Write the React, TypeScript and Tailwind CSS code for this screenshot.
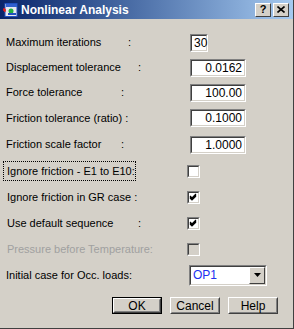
import React from "react";

const font = { fontFamily: '"Liberation Sans", Arial, sans-serif' };

function Sunken({ className = "", children }: { className?: string; children?: React.ReactNode }) {
  return (
    <div className={`border border-t-[#808080] border-l-[#808080] border-b-white border-r-white ${className}`}>
      <div className="h-full w-full border border-t-[#404040] border-l-[#404040] border-b-[#d4d0c8] border-r-[#d4d0c8] bg-white">
        {children}
      </div>
    </div>
  );
}

function Check({ checked, disabled }: { checked?: boolean; disabled?: boolean }) {
  return (
    <div className="w-[13px] h-[13px] border border-t-[#808080] border-l-[#808080] border-b-white border-r-white">
      <div
        className={`h-full w-full border border-t-[#404040] border-l-[#404040] border-b-[#d4d0c8] border-r-[#d4d0c8] ${
          disabled ? "bg-[#d4d0c8]" : "bg-white"
        }`}
      >
        {checked && (
          <svg width="9" height="9" viewBox="0 0 9 9" className="block">
            <path d="M1 4 L3 6 L7 2 M1 5 L3 7 L7 3 M1 3 L3 5 L7 1" stroke="#000" strokeWidth="1.2" fill="none" />
          </svg>
        )}
      </div>
    </div>
  );
}

function Button({ label, primary }: { label: string; primary?: boolean }) {
  const inner = (
    <div className="h-full w-full border border-t-white border-l-white border-b-[#404040] border-r-[#404040]">
      <div className="h-full w-full border border-t-[#d4d0c8] border-l-[#d4d0c8] border-b-[#808080] border-r-[#808080] flex items-center justify-center text-[12px] text-black">
        {label}
      </div>
    </div>
  );
  return (
    <div className={`w-[50px] h-[17px] ${primary ? "border border-black" : ""}`}>{inner}</div>
  );
}

function TitleButton({ children }: { children: React.ReactNode }) {
  return (
    <div className="w-[16px] h-[14px] bg-[#d4d0c8] border border-t-white border-l-white border-b-[#404040] border-r-[#404040] flex items-center justify-center">
      {children}
    </div>
  );
}

type InputRow = { label: string; colon: number | null; value: string; width: number; align: "left" | "right"; h: string };

const inputRows: InputRow[] = [
  { label: "Maximum iterations", colon: 128, value: "30", width: 18, align: "left", h: "h-[25px]" },
  { label: "Displacement tolerance", colon: 138, value: "0.0162", width: 56, align: "right", h: "h-[25px]" },
  { label: "Force tolerance", colon: 121, value: "100.00", width: 56, align: "right", h: "h-[25px]" },
  { label: "Friction tolerance (ratio) :", colon: null, value: "0.1000", width: 56, align: "right", h: "h-[26px]" },
  { label: "Friction scale factor", colon: 121, value: "1.0000", width: 56, align: "right", h: "h-[27px]" },
];

export default function App() {
  return (
    <div className="w-[294px] h-[329px] bg-[#d4d0c8] flex flex-col border-r border-b border-r-[#404040] border-b-[#404040]" style={font}>
      {/* title bar */}
      <div className="h-[19px] bg-gradient-to-r from-[#0a246a] to-[#a6caf0] flex items-center pl-[3px] pr-[4px]">
        <svg width="15" height="14" viewBox="0 0 15 14" className="shrink-0">
          <rect x="2" y="0.5" width="12" height="13" fill="#e8e8f0" stroke="#2050c0" />
          <rect x="3" y="1" width="11" height="3" fill="#3060d0" />
          <path d="M0 7 L3 7 M1 5 L2 9" stroke="#e02020" strokeWidth="1.5" />
          <circle cx="8" cy="8" r="2.5" fill="#20b040" />
          <rect x="5" y="10" width="8" height="2" fill="#2050c0" />
        </svg>
        <span className="ml-[3px] text-white font-bold text-[12px] leading-none">Nonlinear Analysis</span>
        <div className="ml-auto flex gap-[2px]">
          <TitleButton>
            <span className="text-[11px] font-bold leading-none text-black">?</span>
          </TitleButton>
          <TitleButton>
            <svg width="8" height="7" viewBox="0 0 8 7">
              <path d="M0.5 0.5 L7.5 6.5 M7.5 0.5 L0.5 6.5" stroke="#000" strokeWidth="1.6" />
            </svg>
          </TitleButton>
        </div>
      </div>

      <div className="flex flex-col pt-[11px] text-[11px] text-black">
        {inputRows.map((r) => (
          <div key={r.label} className={`${r.h} flex items-center`}>
            <div className="relative w-[190px] pl-[6px] whitespace-nowrap">
              {r.label}
              {r.colon !== null && (
                <span className="absolute top-0" style={{ left: r.colon }}>
                  :
                </span>
              )}
            </div>
            <Sunken className="h-[18px]">
              <div
                className={`h-full leading-[14px] px-[2px] text-[12px] ${r.align === "right" ? "text-right" : "text-left"}`}
                style={{ width: r.width - 4 }}
              >
                {r.value}
              </div>
            </Sunken>
          </div>
        ))}

        <div className="h-[26px] flex items-center">
          <div className="w-[187px] pl-[3px]">
            <span className="inline-block border border-dotted border-black pl-[3px] pr-[1px] py-[3px] leading-[12px] whitespace-nowrap w-[133px]">
              Ignore friction - E1 to E10:
            </span>
          </div>
          <Check />
        </div>
        <div className="h-[26px] flex items-center">
          <div className="w-[187px] pl-[7px] whitespace-nowrap">Ignore friction in GR case :</div>
          <Check checked />
        </div>
        <div className="h-[26px] flex items-center">
          <div className="relative w-[187px] pl-[7px] whitespace-nowrap">
            Use default sequence
            <span className="absolute top-0 left-[138px]">:</span>
          </div>
          <Check checked />
        </div>
        <div className="h-[26px] flex items-center">
          <div className="w-[187px] pl-[7px] whitespace-nowrap text-[#a0a0a0]">Pressure before Temperature:</div>
          <Check disabled />
        </div>
        <div className="h-[26px] flex items-center">
          <div className="w-[189px] pl-[6px] whitespace-nowrap">Initial case for Occ. loads:</div>
          <Sunken className="w-[78px] h-[21px]">
            <div className="flex h-full items-center">
              <span className="pl-[2px] text-[12px] text-[#2030f0]">OP1</span>
              <div className="ml-auto w-[16px] h-full bg-[#d4d0c8] border border-t-white border-l-white border-b-[#404040] border-r-[#404040] flex items-center justify-center">
                <svg width="7" height="4" viewBox="0 0 7 4">
                  <path d="M0 0 L7 0 L3.5 4 Z" fill="#000" />
                </svg>
              </div>
            </div>
          </Sunken>
        </div>

        <div className="flex justify-end gap-[8px] pr-[15px] mt-[9px]">
          <Button label="OK" primary />
          <Button label="Cancel" />
          <Button label="Help" />
        </div>
      </div>
    </div>
  );
}
